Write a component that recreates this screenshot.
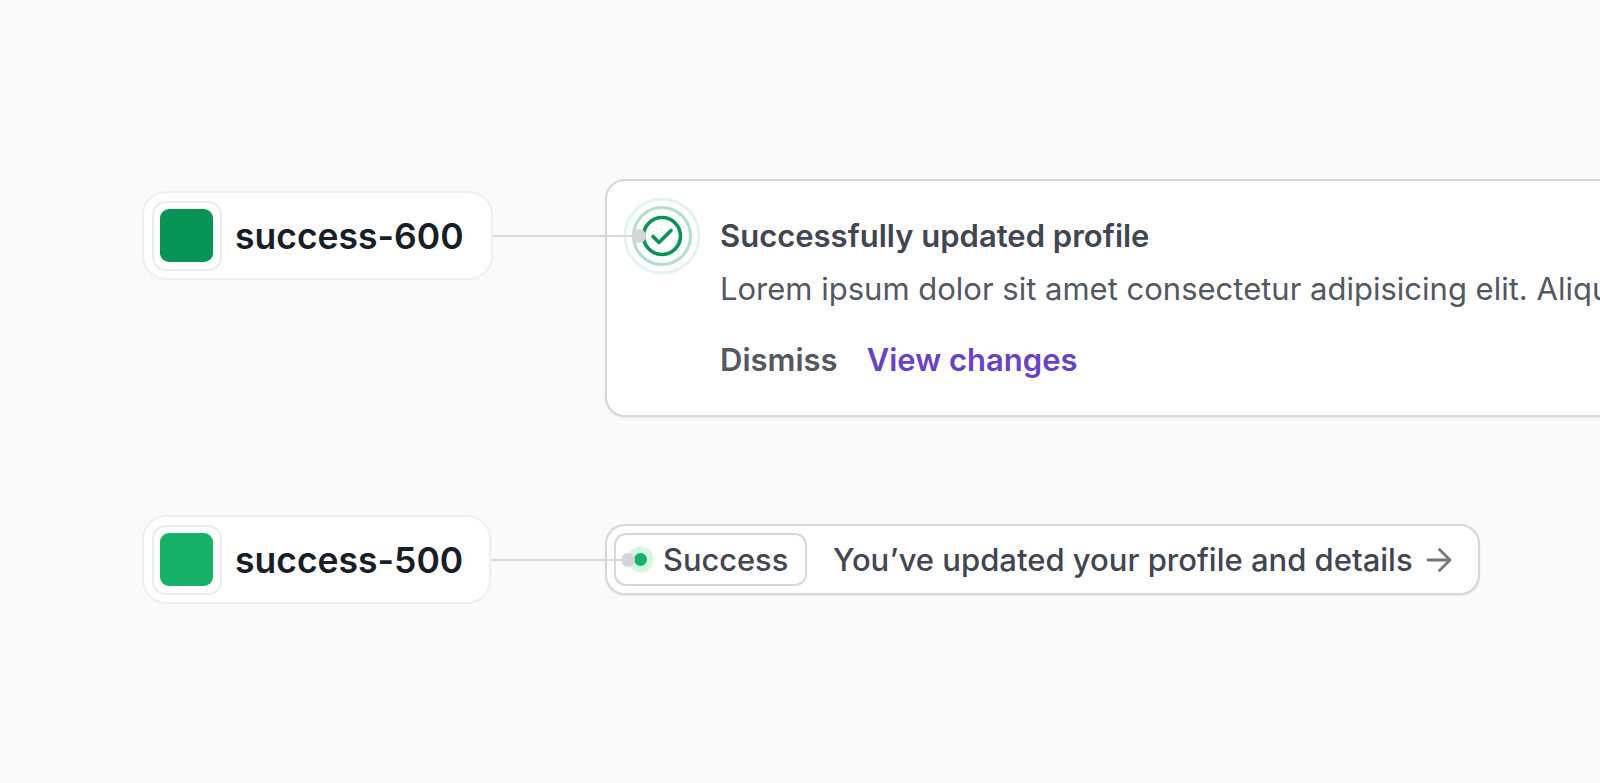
<script>
  const rows = [{ name: 'success-600', tone: 'dark' }, { name: 'success-500', tone: 'light' }];
</script>

<main class="page">
  <section class="row first">
    <div class="lead">
      <div class="chip">
        <span class="frame"><span class="swatch dark"></span></span>
        <span class="name">{rows[0].name}</span>
      </div>
      <span class="line long"></span>
    </div>
    <article class="alert">
      <div class="icon">
        <svg viewBox="0 0 80 80" width="80" height="80" aria-hidden="true">
          <circle cx="40" cy="40" r="37" fill="none" stroke="#079455" stroke-opacity=".1" stroke-width="3" />
          <circle cx="40" cy="40" r="28.500" fill="none" stroke="#079455" stroke-opacity=".3" stroke-width="3" />
          <circle cx="40" cy="40" r="18.500" fill="none" stroke="#079455" stroke-width="3.600" />
          <path d="M31 40.500l6 6 12-12" fill="none" stroke="#079455" stroke-width="3.600" stroke-linecap="round" stroke-linejoin="round" />
        </svg>
      </div>
      <div class="copy">
        <h2>Successfully updated profile</h2>
        <p>Lorem ipsum dolor sit amet consectetur adipisicing elit. Aliquid pariatur, ipsum dolor.</p>
        <div class="actions">
          <span class="dismiss">Dismiss</span>
          <span class="view">View changes</span>
        </div>
      </div>
    </article>
  </section>

  <section class="row second">
    <div class="lead">
      <div class="chip">
        <span class="frame"><span class="swatch light"></span></span>
        <span class="name">{rows[1].name}</span>
      </div>
      <span class="line short"></span>
    </div>
    <div class="group">
      <div class="badge">
        <span class="dot"></span>
        <span>Success</span>
      </div>
      <span class="message">You’ve updated your profile and details</span>
      <svg class="arrow" viewBox="0 0 28 28" width="28" height="28" aria-hidden="true">
        <path d="M3 14h22M14.500 3.500 25 14 14.500 24.500" fill="none" stroke="#717680" stroke-width="2.800" stroke-linecap="round" stroke-linejoin="round" />
      </svg>
    </div>
  </section>
</main>

<style>
  :global(body) {
    margin: 0;
    background: #fafafa;
    overflow: hidden;
  }
  .page {
    height: 783px;
    box-sizing: border-box;
    padding-top: 179px;
    overflow: hidden;
    font-family: Inter, "Liberation Sans", sans-serif;
  }
  .row {
    display: flex;
    padding-left: 142px;
  }
  .first { align-items: flex-start; }
  .second {
    align-items: center;
    margin-top: 98px;
  }
  .lead {
    width: 463px;
    flex: none;
    display: flex;
    align-items: center;
    position: relative;
    z-index: 1;
  }
  .first .lead { margin-top: 12px; }
  .chip {
    display: flex;
    align-items: center;
    gap: 13.500px;
    height: 89px;
    box-sizing: border-box;
    padding: 0 27px 0 7.500px;
    background: #fff;
    border: 2px solid #efeff0;
    border-radius: 24px;
  }
  .second .chip { padding-right: 26px; }
  .frame {
    width: 70px;
    height: 70px;
    box-sizing: border-box;
    display: flex;
    align-items: center;
    justify-content: center;
    border: 2px solid #ececee;
    border-radius: 14px;
  }
  .swatch {
    width: 53px;
    height: 53px;
    border-radius: 9px;
  }
  .dark { background: #079455; }
  .light { background: #17b26a; }
  .name {
    font-size: 35.500px;
    font-weight: 600;
    color: #181d27;
    white-space: nowrap;
    padding-top: 2px;
  }
  .line {
    flex: 1;
    height: 2px;
    background: #d9d9d9;
    position: relative;
  }
  .long { margin-right: -36px; }
  .short { margin-right: -25px; }
  .line::after {
    content: "";
    position: absolute;
    right: -5px;
    top: -6px;
    width: 14px;
    height: 14px;
    border-radius: 50%;
    background: #d5d6d9;
  }
  .alert {
    flex: none;
    width: 1100px;
    height: 238px;
    box-sizing: border-box;
    display: flex;
    background: #fff;
    border: 2px solid #d5d7da;
    border-radius: 20px;
    box-shadow: 0 1px 2px rgba(10, 13, 18, 0.08);
    padding: 15px 0 0 15px;
    gap: 18px;
  }
  .icon {
    width: 80px;
    height: 80px;
    flex: none;
  }
  .icon svg { display: block; }
  .copy { padding-top: 20px; }
  h2 {
    margin: 0;
    font-size: 31px;
    line-height: 40px;
    font-weight: 600;
    color: #414651;
    white-space: nowrap;
  }
  p {
    margin: 13px 0 0;
    font-size: 31px;
    line-height: 40px;
    font-weight: 400;
    color: #535862;
    white-space: nowrap;
  }
  .actions {
    display: flex;
    gap: 29px;
    margin-top: 31px;
    font-size: 31px;
    line-height: 40px;
    font-weight: 600;
  }
  .dismiss { color: #535862; }
  .view { color: #6941c6; }
  .group {
    width: 875px;
    height: 71px;
    box-sizing: border-box;
    display: flex;
    align-items: center;
    flex: none;
    background: #fff;
    border: 2px solid #d5d7da;
    border-radius: 20px;
    box-shadow: 0 1px 2px rgba(10, 13, 18, 0.08);
    padding-left: 7px;
    font-size: 31px;
    font-weight: 500;
    color: #414651;
  }
  .badge {
    display: flex;
    align-items: center;
    gap: 10px;
    height: 53px;
    width: 192.500px;
    box-sizing: border-box;
    background: #fff;
    border: 2px solid #d5d7da;
    border-radius: 12px;
    padding-left: 13px;
    font-size: 30.800px;
  }
  .dot {
    width: 13px;
    height: 13px;
    border-radius: 50%;
    background: #17b26a;
    box-shadow: 0 0 0 6.500px #d3f8df;
    margin: 0 6.500px 0 4.500px;
  }
  .message {
    margin-left: 26.500px;
    white-space: nowrap;
  }
  .arrow {
    margin-left: 12px;
    flex: none;
  }
</style>
